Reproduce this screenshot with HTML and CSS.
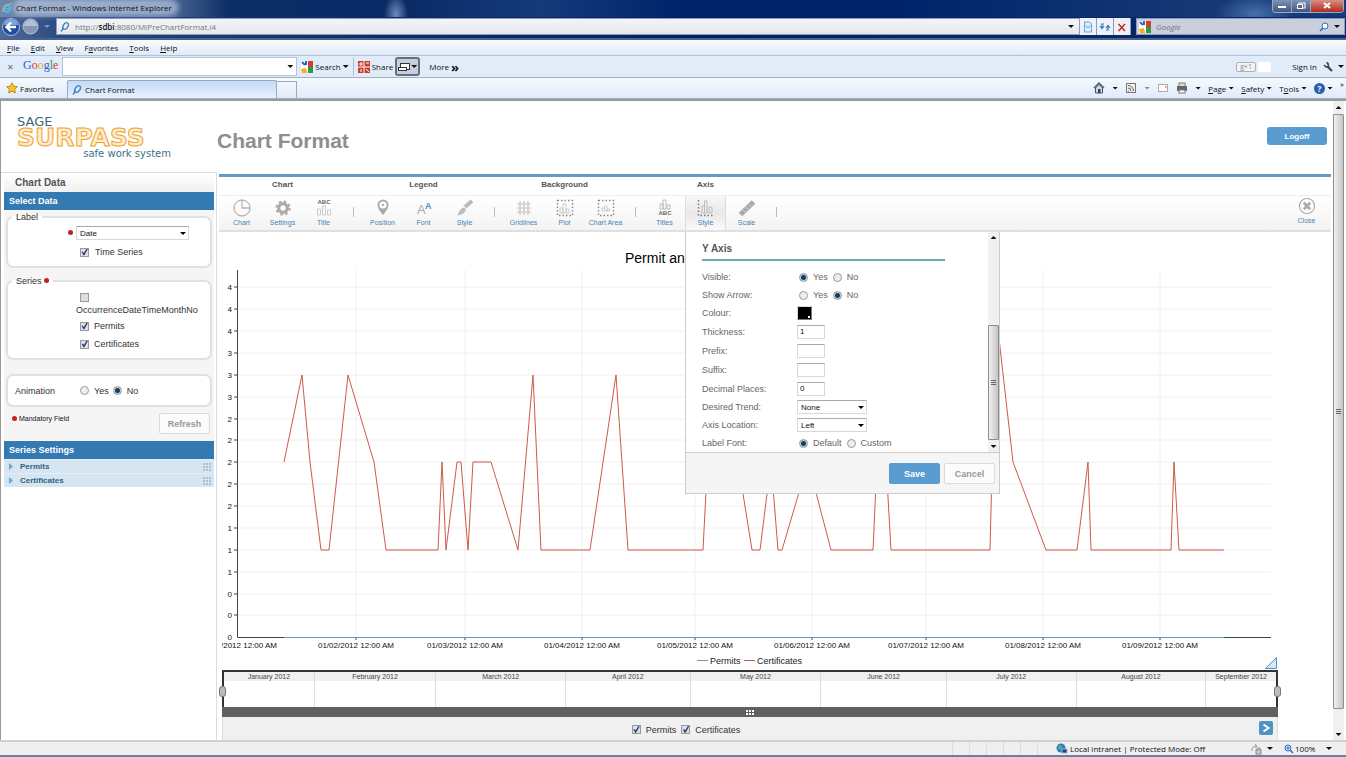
FILE: index.html
```html
<!DOCTYPE html>
<html lang="en">
<head>
    <meta charset="UTF-8">
    <meta name="viewport" content="width=device-width, initial-scale=1.0">
    <title>Chart Format</title>
    <link rel="stylesheet" href="styles.css">
</head>
<body>
    <!-- Browser window -->
    <div class="browser">
        <div class="title-bar">
            <svg class="icon-10" viewBox="0 0 10 10"><circle cx="5" cy="5.500" r="3.200" fill="none" stroke="#4db8f0" stroke-width="2"/><path d="M2.500 5.500h5" stroke="#4db8f0" stroke-width="1.400"/><path d="M1 9C0 6 5 0 9.500 1" fill="none" stroke="#f0c040" stroke-width="1"/></svg>
            <span class="window-title">Chart Format - Windows Internet Explorer</span>
            <div class="window-buttons">
                <button class="win-btn" aria-label="Minimize"><svg viewBox="0 0 18 12"><rect x="5" y="6" width="8" height="2" fill="#fff"/></svg></button>
                <button class="win-btn" aria-label="Restore"><svg viewBox="0 0 18 12"><rect x="7" y="3" width="6" height="5" fill="none" stroke="#fff"/><rect x="5.500" y="4.500" width="5" height="4" fill="#54688f" stroke="#fff"/></svg></button>
                <button class="win-btn win-close" aria-label="Close window"><svg viewBox="0 0 32 12"><path d="M13 3l6 5M19 3l-6 5" stroke="#fff" stroke-width="2"/></svg></button>
            </div>
        </div>

        <div class="nav-bar">
            <button class="plain" aria-label="Back"><svg width="20" height="20" viewBox="0 0 20 20"><circle cx="10" cy="10" r="8.500" fill="#1f4f9c" stroke="#a9bcdc"/><path d="M3 8a7 6 0 0 1 14 0z" fill="#7fa4dc"/><path d="M15 10H6M10 5.500L5.500 10l4.500 4.500" fill="none" stroke="#fff" stroke-width="2.400"/></svg></button>
            <button class="plain" aria-label="Forward"><svg width="17" height="17" viewBox="0 0 17 17"><circle cx="8.500" cy="8.500" r="7.500" fill="#8595b4" stroke="#bcc7dc"/><path d="M2 8a6.500 6 0 0 1 13 0z" fill="#b4c0d6"/></svg></button>
            <span class="caret blue-caret"></span>
            <div class="address">
                <svg class="icon-10" viewBox="0 0 10 10"><ellipse cx="5.600" cy="4" rx="2.300" ry="3.600" transform="rotate(35 5.600 4)" fill="none" stroke="#3c86c0" stroke-width="1.400"/><path d="M3.500 6L1 9.500" stroke="#3c86c0" stroke-width="1.400"/></svg>
                <span>http://<b>sdbi</b>:8080/MIPreChartFormat.i4</span>
                <span class="caret push"></span>
            </div>
            <button class="nav-btn" aria-label="Compatibility view"><svg viewBox="0 0 16 16"><path d="M4.500 3h5l2 2v8h-7z" fill="#dceefa" stroke="#6aa8d8"/><path d="M4 8l2-1 2 2 2-2 2 1" fill="none" stroke="#6aa8d8"/></svg></button>
            <button class="nav-btn" aria-label="Refresh page"><svg viewBox="0 0 16 16"><path d="M7 5H5v4M3 7l2 2.500L7 7M9 11h2V7M9 9l2-2.500L13 9" fill="none" stroke="#2a76c4" stroke-width="1.200"/></svg></button>
            <button class="nav-btn" aria-label="Stop"><svg viewBox="0 0 16 16"><path d="M4.500 5l6.500 7M11 5l-6.500 7" stroke="#cc2222" stroke-width="1.500"/></svg></button>
            <div class="search-box">
                <svg class="icon-12" viewBox="0 0 12 12"><rect width="12" height="12" fill="#fff"/><rect x="7" width="5" height="6" fill="#d93a2b"/><rect x="7" y="6" width="5" height="6" fill="#2c9a46"/><path d="M0 8l5-1 1 5H1z" fill="#f0b020"/><path d="M1 1l3 3M5 0v4" stroke="#2a62c8" stroke-width="2"/></svg>
                <input type="text" placeholder="Google" aria-label="Search Google">
                <svg class="icon-10" viewBox="0 0 10 10"><circle cx="6" cy="4" r="3" fill="#fff" stroke="#2c6cc0"/><path d="M4 6L1 9" stroke="#2c6cc0" stroke-width="1.600"/></svg>
                <span class="caret"></span>
            </div>
        </div>

        <div class="menu-bar">
            <a href="#"><u>F</u>ile</a>
            <a href="#"><u>E</u>dit</a>
            <a href="#"><u>V</u>iew</a>
            <a href="#">F<u>a</u>vorites</a>
            <a href="#"><u>T</u>ools</a>
            <a href="#"><u>H</u>elp</a>
        </div>

        <div class="google-bar">
            <button class="plain close-x" aria-label="Close toolbar">✕</button>
            <span class="google"><i class="b">G</i><i class="r">o</i><i class="y">o</i><i class="b">g</i><i class="g">l</i><i class="r">e</i></span>
            <div class="google-input">
                <input type="text" aria-label="Google toolbar search">
                <span class="caret"></span>
            </div>
            <svg class="icon-12" viewBox="0 0 12 12"><rect width="12" height="12" fill="#fff"/><rect x="7" width="5" height="6" fill="#d93a2b"/><rect x="7" y="6" width="5" height="6" fill="#2c9a46"/><path d="M0 8l5-1 1 5H1z" fill="#f0b020"/><path d="M1 1l3 3M5 0v4" stroke="#2a62c8" stroke-width="2"/></svg>
            <button class="plain">Search</button>
            <span class="caret"></span>
            <span class="bar-sep"></span>
            <svg class="icon-12" viewBox="0 0 12 12"><rect width="12" height="12" fill="#c8402c"/><path d="M6 0v12M0 6h12" stroke="#fff"/><path d="M3 1v4M1 3h4M8 2h3M8 8l3 3M3 8v3" stroke="#fff"/></svg>
            <button class="plain">Share</button>
            <button class="share-btn" aria-label="Sidebar"><svg width="12" height="12" viewBox="0 0 12 12"><rect x="2.500" y="2.500" width="9" height="6" fill="#fff" stroke="#333"/><rect x=".5" y="6.500" width="8" height="3" fill="#fff" stroke="#333"/></svg><span class="caret"></span></button>
            <button class="plain more">More <b>»</b></button>
            <span class="plus-one push">g+1</span>
            <span class="blank-chip"></span>
            <button class="plain sign-in">Sign In</button>
            <svg class="icon-10" viewBox="0 0 10 10"><path d="M4.500 4.500L9 9" stroke="#444" stroke-width="2.200"/><path d="M1 3l2 2 2.500-.5L5 1.500 3.500.5" fill="none" stroke="#444" stroke-width="1.600"/></svg>
            <span class="caret"></span>
        </div>

        <div class="tab-bar">
            <button class="plain favorites"><svg width="12" height="12" viewBox="0 0 12 12"><path d="M6 .8l1.600 3.400 3.700.5-2.700 2.600.7 3.700L6 9.200 2.700 11l.7-3.700L.7 4.700l3.700-.5z" fill="#f6c22e" stroke="#c88a10"/></svg>Favorites</button>
            <div class="tab">
                <svg class="icon-10" viewBox="0 0 10 10"><ellipse cx="5.600" cy="4" rx="2.300" ry="3.600" transform="rotate(35 5.600 4)" fill="none" stroke="#3c86c0" stroke-width="1.400"/><path d="M3.500 6L1 9.500" stroke="#3c86c0" stroke-width="1.400"/></svg>
                Chart Format
            </div>
            <div class="new-tab"></div>
            <div class="commands">
                <svg class="icon-12" viewBox="0 0 12 12"><path d="M1 6l5-5 5 5" fill="none" stroke="#456" stroke-width="1.300"/><path d="M2.500 6v5h7V6L6 2.500z" fill="#cfdced" stroke="#456"/><rect x="5" y="7" width="2.500" height="4" fill="#345"/></svg>
                <span class="caret"></span>
                <svg class="icon-12 gap" viewBox="0 0 12 12"><rect x="1.500" y="1.500" width="9" height="9" fill="#eee" stroke="#777"/><path d="M3 9h1M3 6a3 3 0 0 1 3 3M3 3.500A5.500 5.500 0 0 1 8.500 9" fill="none" stroke="#666"/></svg>
                <span class="caret dim"></span>
                <svg class="icon-12" viewBox="0 0 12 12"><rect x="1.500" y="2.500" width="9" height="7" fill="#fff" stroke="#aaa"/><rect x="8" y="4" width="1.500" height="2" fill="#d99"/></svg>
                <svg class="icon-12 gap" viewBox="0 0 12 12"><rect x="3" y="1" width="6" height="4" fill="#ddd" stroke="#777"/><rect x="1" y="4" width="10" height="5" fill="#666"/><rect x="3" y="8" width="6" height="3" fill="#fff" stroke="#777"/></svg>
                <span class="caret"></span>
                <a href="#"><span><u>P</u>age</span><span class="caret"></span></a>
                <a href="#"><span><u>S</u>afety</span><span class="caret"></span></a>
                <a href="#"><span>T<u>o</u>ols</span><span class="caret"></span></a>
                <span class="help">?</span>
                <span class="caret"></span>
                <span class="chev">»</span>
            </div>
        </div>
    </div>

    <!-- Page -->
    <div class="page">
        <div class="content">
            <header class="header">
                <svg class="logo" width="166" height="46" viewBox="0 0 166 46" role="img" aria-label="Sage Surpass">
                    <text x="0" y="11" class="logo-sage">SAGE</text>
                    <text x="0" y="31" class="logo-surpass">SURPASS</text>
                    <text x="154" y="42" class="logo-tag">safe work system</text>
                </svg>
                <h1>Chart Format</h1>
                <button class="logoff">Logoff</button>
            </header>

            <div class="columns">
                <aside class="sidebar">
                    <h2 class="chart-data">Chart Data</h2>
                    <h3 class="bar">Select Data</h3>
                    <form class="select-data">
                        <fieldset class="box label-box">
                            <legend>Label</legend>
                            <div class="date-row">
                                <span class="dot"></span>
                                <span class="select wide"><select aria-label="Label field"><option>Date</option></select></span>
                            </div>
                            <label class="check time-series"><input type="checkbox" checked>Time Series</label>
                        </fieldset>
                        <fieldset class="box series-box">
                            <legend>Series <span class="dot"></span></legend>
                            <label class="check stacked"><input type="checkbox"><span>OccurrenceDateTimeMonthNo</span></label>
                            <label class="check"><input type="checkbox" checked>Permits</label>
                            <label class="check"><input type="checkbox" checked>Certificates</label>
                        </fieldset>
                        <div class="box animation">
                            <span class="animation-label">Animation</span>
                            <label class="check"><input type="radio" name="animation">Yes</label>
                            <label class="check"><input type="radio" name="animation" checked>No</label>
                        </div>
                        <div class="form-foot">
                            <span class="mandatory"><span class="dot"></span>Mandatory Field</span>
                            <button type="button" class="btn">Refresh</button>
                        </div>
                    </form>
                    <h3 class="bar">Series Settings</h3>
                    <div class="series-row"><span class="arrow"></span>Permits<span class="grip"></span></div>
                    <div class="series-row"><span class="arrow"></span>Certificates<span class="grip"></span></div>
                </aside>

                <main class="main">
                    <div class="group-titles">
                        <span>Chart</span>
                        <span>Legend</span>
                        <span>Background</span>
                        <span>Axis</span>
                    </div>
                    <div class="tools">
                        <button class="tool"><svg viewBox="0 0 20 20"><circle cx="10" cy="10" r="8" fill="none" stroke="#b8b8b8" stroke-width="1.300"/><path d="M10 2v8h8" fill="none" stroke="#b8b8b8" stroke-width="1.300"/></svg>Chart</button>
                        <button class="tool"><svg viewBox="0 0 20 20"><circle cx="10" cy="10" r="4.300" fill="none" stroke="#aaa" stroke-width="3.200"/><circle cx="10" cy="10" r="6.500" fill="none" stroke="#aaa" stroke-width="2.200" stroke-dasharray="2.600 2.500"/></svg>Settings</button>
                        <button class="tool"><svg viewBox="0 0 20 20"><text x="10" y="6" class="abc">ABC</text><path d="M3.500 11h3v6h-3zM8.500 8h3v9h-3zM13.500 12h3v5h-3z" fill="none" stroke="#ccc"/></svg>Title</button>
                        <span class="tool-sep"></span>
                        <button class="tool"><svg viewBox="0 0 20 20"><path d="M10 1.500a5.500 5.500 0 0 0-5.500 5.500c0 4 5.500 10 5.500 10s5.500-6 5.500-10A5.500 5.500 0 0 0 10 1.500z" fill="#aaa"/><circle cx="10" cy="7" r="3.600" fill="#fff"/><circle cx="10" cy="7" r="1.200" fill="#aaa"/></svg>Position</button>
                        <button class="tool"><svg viewBox="0 0 20 20"><text x="3" y="16" font-size="13" fill="#aaa">A</text><text x="11" y="11" font-size="9" font-weight="bold" fill="#4d8fc0">A</text></svg>Font</button>
                        <button class="tool"><svg viewBox="0 0 20 20"><path d="M17 3l-7 6" stroke="#bbb" stroke-width="4"/><path d="M9 9.500l2 2c-1 4-5 5.500-9 6 2-2 2-7 7-8z" fill="#bbb"/></svg>Style</button>
                        <span class="tool-sep"></span>
                        <button class="tool"><svg viewBox="0 0 20 20"><path d="M6 3v14M10 3v14M14 3v14M3 6h14M3 10h14M3 14h14" stroke="#c4c4c4" stroke-width="1.200"/></svg>Gridlines</button>
                        <button class="tool"><svg viewBox="0 0 20 20"><rect x="2.500" y="2.500" width="15" height="15" fill="none" stroke="#888" stroke-width="1.400" stroke-dasharray="1.500 2"/><path d="M5 10h3v5H5zM8 6h3v9H8zM11 11h3v4h-3z" fill="none" stroke="#ccc"/></svg>Plot</button>
                        <button class="tool"><svg viewBox="0 0 20 20"><rect x="2.500" y="2.500" width="15" height="15" fill="none" stroke="#888" stroke-width="1.400" stroke-dasharray="1.500 2"/><path d="M6 10h2.500v3H6zM8.500 8H11v5H8.500zM11 11h2.500v2H11z" fill="none" stroke="#ccc"/></svg>Chart Area</button>
                        <span class="tool-sep"></span>
                        <button class="tool"><svg viewBox="0 0 20 20"><path d="M5 6h3v5H5zM8 2h3v9H8zM12 7h3v4h-3z" fill="none" stroke="#bbb"/><text x="10" y="17" class="abc">ABC</text></svg>Titles</button>
                        <div class="tool-wrap">
                            <button class="tool active"><svg viewBox="0 0 20 20"><path d="M2.500 2v15.500H18" fill="none" stroke="#777" stroke-width="1.500" stroke-dasharray="1.500 2"/><path d="M6 8h2.500v7H6zM8.500 3H11v12H8.500zM13 9h3v6h-3z" fill="none" stroke="#bbb"/></svg>Style</button>

                            <!-- Axis style panel -->
                            <form class="panel">
                                <div class="panel-scroll">
                                    <div class="panel-body">
                                        <h4>Y Axis</h4>
                                        <div class="field"><span>Visible:</span><label class="check"><input type="radio" name="visible" checked>Yes</label><label class="check"><input type="radio" name="visible">No</label></div>
                                        <div class="field"><span>Show Arrow:</span><label class="check"><input type="radio" name="arrow">Yes</label><label class="check"><input type="radio" name="arrow" checked>No</label></div>
                                        <div class="field"><span>Colour:</span><button type="button" class="swatch" aria-label="Colour"></button></div>
                                        <div class="field tall"><label for="thickness">Thickness:</label><input type="text" id="thickness" value="1"></div>
                                        <div class="field tall"><label for="prefix">Prefix:</label><input type="text" id="prefix"></div>
                                        <div class="field tall"><label for="suffix">Suffix:</label><input type="text" id="suffix"></div>
                                        <div class="field tall"><label for="decimals">Decimal Places:</label><input type="text" id="decimals" value="0"></div>
                                        <div class="field"><label for="trend">Desired Trend:</label><span class="select"><select id="trend"><option>None</option></select></span></div>
                                        <div class="field"><label for="location">Axis Location:</label><span class="select"><select id="location"><option>Left</option></select></span></div>
                                        <div class="field"><span>Label Font:</span><label class="check"><input type="radio" name="font" checked>Default</label><label class="check"><input type="radio" name="font">Custom</label></div>
                                    </div>
                                    <div class="scrollbar panel-bar">
                                        <span class="caret up"></span>
                                        <div class="thumb"><i></i></div>
                                        <span class="caret"></span>
                                    </div>
                                </div>
                                <div class="panel-foot">
                                    <button type="button" class="btn save">Save</button>
                                    <button type="button" class="btn">Cancel</button>
                                </div>
                            </form>
                        </div>
                        <button class="tool"><svg viewBox="0 0 20 20"><path d="M3.500 16.500L16.500 4" stroke="#aaa" stroke-width="5"/><path d="M6 12l2 2M9 9l2 2M12 6.500l2 2" stroke="#ddd"/></svg>Scale</button>
                        <span class="tool-sep"></span>
                        <button class="tool close"><svg viewBox="0 0 20 20"><circle cx="10" cy="10" r="7.500" fill="#fff" stroke="#aaa" stroke-width="1.200"/><path d="M6.800 6.800l6.400 6.400M13.200 6.800l-6.400 6.400" stroke="#aaa" stroke-width="2.800"/></svg>Close</button>
                    </div>

                    <div class="chart">
                        <svg class="plot" viewBox="0 0 1056 438">
                            <text x="403" y="31" class="chart-title">Permit and</text>
                            <path class="grid" d="M16 55H1049M16 77H1049M16 99H1049M16 121H1049M16 143H1049M16 165H1049M16 187H1049M16 208H1049M16 230H1049M16 252H1049M16 274H1049M16 296H1049M16 318H1049M16 340H1049M16 362H1049M16 383H1049M134 38V405M243 38V405M360 38V405M473 38V405M590 38V405M704 38V405M821 38V405M938 38V405"/>
                            <path class="axis" d="M15.500 38V405.500H1049M12 55H16M12 77H16M12 99H16M12 121H16M12 143H16M12 165H16M12 187H16M12 208H16M12 230H16M12 252H16M12 274H16M12 296H16M12 318H16M12 340H16M12 362H16M12 383H16M134 405v3M243 405v3M360 405v3M473 405v3M590 405v3M704 405v3M821 405v3M938 405v3"/>
                            <path class="permits" d="M62 405.500H1002"/>
                            <polyline class="certificates" points="62,230 80,143 88,230 99,318 107,318 126,143 152,230 164,318 216,318 220,230 224,318 235,230 239,230 246,318 251,230 269,230 296,318 311,143 319,318 368,318 394,143 406,318 481,318 490,143 502,143 530,318 538,318 549,230 556,318 560,318 586,230 609,318 651,318 655,230 664,230 669,318 768,318 774,80 791,230 824,318 855,318 866,230 869,318 949,318 952,230 957,318 1002,318"/>
                            <g class="y-labels">
                                <text x="10" y="58">4</text>
                                <text x="10" y="80">4</text>
                                <text x="10" y="102">4</text>
                                <text x="10" y="124">3</text>
                                <text x="10" y="146">3</text>
                                <text x="10" y="168">3</text>
                                <text x="10" y="190">2</text>
                                <text x="10" y="211">2</text>
                                <text x="10" y="233">2</text>
                                <text x="10" y="255">2</text>
                                <text x="10" y="277">2</text>
                                <text x="10" y="299">1</text>
                                <text x="10" y="321">1</text>
                                <text x="10" y="343">1</text>
                                <text x="10" y="365">0</text>
                                <text x="10" y="386">0</text>
                                <text x="10" y="408">0</text>
                            </g>
                            <g class="x-labels">
                                <text x="27" y="416">/2012 12:00 AM</text>
                                <text x="134" y="416">01/02/2012 12:00 AM</text>
                                <text x="243" y="416">01/03/2012 12:00 AM</text>
                                <text x="360" y="416">01/04/2012 12:00 AM</text>
                                <text x="473" y="416">01/05/2012 12:00 AM</text>
                                <text x="590" y="416">01/06/2012 12:00 AM</text>
                                <text x="704" y="416">01/07/2012 12:00 AM</text>
                                <text x="821" y="416">01/08/2012 12:00 AM</text>
                                <text x="938" y="416">01/09/2012 12:00 AM</text>
                            </g>
                            <path class="permits" d="M475 428.500h11"/>
                            <text x="488" y="432" class="legend">Permits</text>
                            <path class="certificates" d="M522 428.500h11"/>
                            <text x="535" y="432" class="legend">Certificates</text>
                            <path d="M1043.500 436.500h11v-11z" fill="#d5e8f5" stroke="#4d8fc0"/>
                        </svg>

                        <div class="range">
                            <span>January 2012</span>
                            <span>February 2012</span>
                            <span>March 2012</span>
                            <span>April 2012</span>
                            <span>May 2012</span>
                            <span>June 2012</span>
                            <span>July 2012</span>
                            <span>August 2012</span>
                            <span>September 2012</span>
                            <i class="handle left"></i>
                            <i class="handle right"></i>
                        </div>
                        <div class="range-bar"><span class="grip"></span></div>
                        <div class="chart-foot">
                            <label class="check"><input type="checkbox" checked>Permits</label>
                            <label class="check"><input type="checkbox" checked>Certificates</label>
                            <button class="next" aria-label="Next"><svg width="14" height="14" viewBox="0 0 14 14"><path d="M4.500 3.500l5 3.500-5 3.500" fill="none" stroke="#fff" stroke-width="2"/></svg></button>
                        </div>
                    </div>
                </main>
            </div>
        </div>
        <div class="scrollbar page-bar">
            <span class="caret up"></span>
            <div class="thumb"><i></i></div>
            <span class="caret"></span>
        </div>
    </div>

    <!-- Status bar -->
    <div class="status-bar">
        <div class="cells"><i></i><i></i><i></i><i></i><i></i><i></i></div>
        <div class="zone">
            <svg class="icon-12" viewBox="0 0 12 12"><circle cx="5" cy="5" r="4.500" fill="#2a7fc8"/><path d="M2 3l3-1 1 3-3 2z" fill="#5cb85c"/><rect x="6" y="6" width="5" height="4" fill="#1c3f8c" stroke="#9bc"/></svg>
            Local intranet | Protected Mode: Off
        </div>
        <div class="privacy">
            <svg class="icon-12" viewBox="0 0 12 12"><path d="M2 8a4 4 0 0 1 4-5M5 1l2 2-2 2" fill="none" stroke="#999"/><rect x="6" y="7" width="5" height="4" fill="#ccc" stroke="#888"/><path d="M7 7V5h3v2" fill="none" stroke="#888"/></svg>
            <span class="caret"></span>
        </div>
        <div class="zoom">
            <svg class="icon-10" viewBox="0 0 10 10"><circle cx="4" cy="4" r="3" fill="#cfe3f7" stroke="#2c6cc0"/><path d="M6 6l3 3" stroke="#2c6cc0" stroke-width="1.600"/><path d="M2.500 4h3M4 2.500v3" stroke="#2c6cc0"/></svg>
            100%
            <span class="caret push"></span>
        </div>
    </div>
</body>
</html>
```

FILE: styles.css
```css
* {
    margin: 0;
    padding: 0;
    box-sizing: border-box;
}

body {
    display: flex;
    flex-direction: column;
    height: 100vh;
    overflow: hidden;
    background: #fff;
    font-family: "Liberation Sans", Arial, sans-serif;
    font-size: 9px;
    color: #333;
}

button,
input,
select {
    font: inherit;
    color: inherit;
    border: none;
    background: none;
}

a {
    color: inherit;
    text-decoration: none;
}

svg {
    display: block;
    flex: none;
}

.icon-10 {
    width: 10px;
    height: 10px;
}

.icon-12 {
    width: 12px;
    height: 12px;
}

.push {
    margin-left: auto;
}

.caret {
    display: inline-block;
    flex: none;
    width: 6px;
    height: 3px;
    background: #111;
    clip-path: polygon(0 0, 100% 0, 50% 100%);
}

.caret.up {
    clip-path: polygon(50% 0, 100% 100%, 0 100%);
}

.caret.dim {
    background: #888;
}

/* Browser window */
.browser,
.status-bar {
    font-family: "Open Sans", "Segoe UI", sans-serif;
    font-size: 8px;
    color: #111;
}

.title-bar {
    display: flex;
    align-items: center;
    gap: 4px;
    height: 17px;
    padding: 0 0 2px 2px;
    background:
        radial-gradient(ellipse 12px 20px at 396px 14px, rgba(150, 180, 225, 0.7), transparent),
        radial-gradient(ellipse 40px 20px at 1255px 14px, rgba(120, 165, 220, 0.5), transparent),
        linear-gradient(90deg, #6f86ac 0, #56719d 160px, #0c2d66 230px, #0a2a66 400px, #163a7a 540px, #00246a 680px, #00246a 900px, #163875 1200px, #123a7c);
}

.window-title {
    padding: 0 4px 0 0;
    border-radius: 6px;
    background: rgba(190, 205, 228, 0.6);
    box-shadow: 0 0 5px 3px rgba(190, 205, 228, 0.6);
}

.window-buttons {
    display: flex;
    align-self: flex-start;
    margin-left: auto;
    margin-right: 2px;
    border: 1px solid #9aabc8;
    border-top: none;
    border-radius: 0 0 4px 4px;
    overflow: hidden;
}

.win-btn {
    height: 12px;
    background: linear-gradient(#7f93b8, #42567f);
    border-right: 1px solid #9aabc8;
}

.win-btn svg {
    height: 12px;
}

.win-close {
    border-right: none;
    background: linear-gradient(#d99084, #b02a18);
}

.nav-bar {
    display: flex;
    align-items: center;
    height: 23px;
    padding: 0 1px 2px;
    background: linear-gradient(90deg, #51699a 0, #2c4a80 60px, #12306a 300px, #04205f 700px, #0a2a68);
    border-bottom: 2px solid #4a628f;
}

.plain {
    display: flex;
    align-items: center;
}

.nav-bar .plain + .plain {
    margin-left: 1px;
}

.blue-caret {
    margin: 0 6px 0 5px;
    background: #6f9bdc;
}

.address {
    display: flex;
    flex: 1;
    align-items: center;
    gap: 5px;
    height: 17px;
    padding: 0 5px 0 3px;
    border: 1px solid #8c9cba;
    background: linear-gradient(#f4f4fa, #e3e9ea);
    color: #777;
}

.address b {
    color: #111;
    font-weight: 600;
}

.nav-btn {
    height: 17px;
    width: 17px;
    border-right: 1px solid #8c9cba;
    background: #eef1f8;
}

.nav-btn svg {
    width: 16px;
    height: 16px;
}

.search-box {
    display: flex;
    align-items: center;
    gap: 5px;
    width: 209px;
    height: 17px;
    margin-left: 5px;
    padding: 0 4px 0 2px;
    border: 1px solid #8c9cba;
    background: #c9cfdd;
}

.search-box input {
    flex: 1;
    min-width: 0;
}

.search-box input::placeholder {
    color: #777;
    font-style: italic;
}

.menu-bar {
    display: flex;
    align-items: center;
    gap: 11px;
    height: 16px;
    padding: 0 7px;
    background: linear-gradient(#fafcff, #dfeaf7);
    border-bottom: 1px solid #b4c0d2;
}

.google-bar {
    display: flex;
    align-items: center;
    gap: 2px;
    height: 22px;
    padding: 0 2px 0 7px;
    background: #e0ecf9;
    border-bottom: 1px solid #a4b0c2;
}

.close-x {
    color: #667;
    font-size: 8px;
}

.google {
    margin: 0 2px 2px 7px;
    font-family: "Liberation Serif", serif;
    font-size: 12px;
}

.google i {
    font-style: normal;
}

.google .b {
    color: #2f5fd0;
}

.google .r {
    color: #d8402c;
}

.google .y {
    color: #e8a818;
}

.google .g {
    color: #2c9a46;
}

.google-input {
    display: flex;
    align-items: center;
    width: 235px;
    height: 19px;
    margin-right: 2px;
    padding-right: 3px;
    background: #fff;
    border: 1px solid #b8c4d4;
}

.google-input input {
    flex: 1;
    min-width: 0;
}

.bar-sep {
    width: 1px;
    height: 18px;
    margin: 0 2px;
    background: #b4c0d2;
}

.share-btn {
    display: flex;
    align-items: center;
    gap: 1px;
    height: 19px;
    padding: 0 1px 0 1px;
    border: 2px solid #68707e;
    border-radius: 3px;
    background: #c5d0de;
}

.more {
    gap: 2px;
    margin-left: 7px;
}

.more b {
    font-size: 13px;
    line-height: 12px;
}

.plus-one {
    padding: 0 3px;
    border: 1px solid #b0b0b0;
    border-radius: 2px;
    background: #f4f4f4;
    color: #888;
    font-size: 7px;
    line-height: 8px;
}

.blank-chip {
    width: 13px;
    height: 10px;
    margin-right: 19px;
    background: #fff;
}

.sign-in {
    margin-right: 4px;
}

.google-bar > .caret:last-child {
    margin-left: 3px;
}

.tab-bar {
    display: flex;
    align-items: flex-end;
    height: 21px;
    padding-left: 6px;
    background: linear-gradient(#f6faff, #e0eaf8);
    border-bottom: 1px solid #a4b0c2;
}

.favorites {
    gap: 2px;
    width: 61px;
    height: 20px;
}

.tab {
    display: flex;
    align-items: center;
    gap: 3px;
    width: 210px;
    height: 18px;
    padding-left: 4px;
    background: linear-gradient(#c3d9f5, #e8f2fe);
    border: 1px solid #98a8c0;
    border-bottom: none;
    border-radius: 2px 2px 0 0;
}

.new-tab {
    width: 20px;
    height: 17px;
    border: 1px solid #98a8c0;
    border-left: none;
    border-bottom: none;
}

.commands {
    display: flex;
    align-items: center;
    gap: 7px;
    height: 20px;
    margin-left: auto;
    padding-right: 2px;
}

.commands a {
    display: flex;
    align-items: center;
    gap: 2px;
}

.help {
    width: 11px;
    height: 11px;
    border-radius: 50%;
    background: #2c5fae;
    color: #fff;
    font-size: 8px;
    font-weight: bold;
    line-height: 11px;
    text-align: center;
}

.help + .caret {
    margin-left: -5px;
}

.chev {
    align-self: flex-start;
}

/* Page frame */
.page {
    display: flex;
    flex: 1;
    min-height: 0;
    border-top: 2px solid #999;
    border-left: 1px solid #999;
}

.content {
    display: flex;
    flex: 1;
    flex-direction: column;
    min-width: 0;
}

.scrollbar {
    display: flex;
    flex-direction: column;
    align-items: center;
    flex: none;
    width: 11px;
    padding: 4px 0;
    background: #f0f0f0;
}

.thumb {
    display: flex;
    align-items: center;
    justify-content: center;
    width: 11px;
    background: linear-gradient(90deg, #f0f0f0, #c4c4c4);
    border: 1px solid #8e8e8e;
    border-radius: 1px;
}

.thumb i {
    width: 5px;
    height: 5px;
    background: repeating-linear-gradient(#666 0 1px, transparent 1px 2px);
}

.page-bar {
    margin: 0 2px;
    padding-top: 5px;
}

.page-bar .thumb {
    flex: 1;
    margin: 5px 0 24px;
}

/* Header */
.header {
    display: flex;
    flex: none;
    height: 71px;
    padding-left: 16px;
}

.logo {
    margin-top: 14px;
    font-family: "DejaVu Sans", sans-serif;
}

.logo-sage {
    font-size: 13px;
    fill: #3c6a78;
}

.logo-surpass {
    font-size: 25px;
    font-weight: bold;
    fill: #fdeccd;
    stroke: #f0a22c;
}

.logo-tag {
    font-size: 10px;
    fill: #3f7088;
    text-anchor: end;
}

h1 {
    margin: 28px 0 0 34px;
    font-size: 21px;
    line-height: 24px;
    color: #8e8e8e;
}

.logoff {
    width: 60px;
    height: 18px;
    margin: 26px 4px 0 auto;
    border-radius: 3px;
    background: #5a9bd0;
    color: #fff;
    font-weight: bold;
    font-size: 8px;
}

.columns {
    display: flex;
    flex: 1;
    min-height: 0;
}

/* Sidebar */
.sidebar {
    width: 216px;
    flex: none;
    padding: 0 2px 0 3px;
    border-top: 1px solid #ddd;
    border-right: 1px solid #ddd;
}

.chart-data {
    padding-left: 11px;
    font-size: 10px;
    line-height: 19px;
    color: #555;
    background: linear-gradient(#fff, #f0f0f0);
}

.bar {
    padding-left: 5px;
    background: #337ab3;
    color: #fff;
    font-size: 9px;
    line-height: 18px;
}

.select-data {
    padding: 2px 2px 7px;
    background: #f5f5f5;
}

.box {
    border: 2px solid #e0e0e0;
    border-radius: 7px;
    background: #fff;
}

.box legend {
    margin-left: 4px;
    padding: 0 4px;
    line-height: 10px;
}

.label-box {
    height: 56px;
    margin-bottom: 8px;
}

.series-box {
    height: 84px;
    margin-bottom: 14px;
}

.dot {
    display: inline-block;
    width: 5px;
    height: 5px;
    margin-bottom: 1px;
    border-radius: 50%;
    background: #c82020;
}

.date-row {
    display: flex;
    align-items: center;
    gap: 3px;
    padding: 4px 0 0 60px;
}

.select {
    position: relative;
    width: 70px;
}

.select.wide {
    width: 113px;
}

.select select {
    display: block;
    width: 100%;
    height: 14px;
    padding-left: 3px;
    appearance: none;
    background: #fff;
    border: 1px solid #d8d8d8;
    border-top-color: #aaa;
    font-size: 8px;
    color: #111;
}

.select::after {
    content: "";
    position: absolute;
    top: 6px;
    right: 3px;
    width: 6px;
    height: 3px;
    background: #000;
    clip-path: polygon(0 0, 100% 0, 50% 100%);
}

.check {
    display: flex;
    align-items: center;
    gap: 5px;
}

.time-series {
    gap: 6px;
    margin-top: 7px;
    padding-left: 72px;
}

.series-box .check {
    height: 18px;
    padding-left: 72px;
}

.series-box .stacked {
    flex-direction: column;
    align-items: flex-start;
    gap: 3px;
    height: 24px;
    margin-top: 7px;
    padding-left: 68px;
}

.stacked input {
    margin-left: 4px;
}

input[type="checkbox"] {
    flex: none;
    width: 9px;
    height: 9px;
    appearance: none;
    border: 1px solid #999;
    background: #dcdfe6;
}

input[type="checkbox"]:checked::before {
    content: "";
    display: block;
    width: 7px;
    height: 7px;
    background: #2c3f78;
    clip-path: polygon(8% 45%, 28% 45%, 42% 65%, 78% 5%, 100% 5%, 48% 98%, 34% 98%);
}

input[type="radio"] {
    flex: none;
    width: 9px;
    height: 9px;
    appearance: none;
    border: 1px solid #999;
    border-radius: 50%;
    background: #eee;
}

input[type="radio"]:checked {
    background: radial-gradient(circle, #143f5c 0 2px, #b5d6e8 3px);
}

.animation {
    display: flex;
    align-items: center;
    height: 33px;
    gap: 4px;
    padding-left: 7px;
}

.animation-label {
    width: 61px;
}

.form-foot {
    display: flex;
    justify-content: space-between;
    padding: 6px 2px 0 6px;
}

.mandatory {
    display: flex;
    align-items: center;
    gap: 2px;
    height: 10px;
    font-size: 7px;
    color: #111;
}

.mandatory .dot {
    margin: 0;
}

.btn {
    width: 51px;
    height: 21px;
    border: 1px solid #dadada;
    border-radius: 2px;
    background: #fcfcfc;
    color: #999;
    font-weight: bold;
}

.series-row {
    display: flex;
    align-items: center;
    gap: 7px;
    height: 14px;
    padding: 0 3px 0 5px;
    background: #d5e5f2;
    border-top: 1px solid #e4eef8;
    color: #33607f;
    font-size: 8px;
    font-weight: bold;
}

.arrow {
    width: 4px;
    height: 7px;
    background: #6fa5cc;
    clip-path: polygon(0 0, 100% 50%, 0 100%);
}

.grip {
    width: 8px;
    height: 8px;
    background: repeating-linear-gradient(90deg, transparent 0 2px, #d5e5f2 2px 3px), repeating-linear-gradient(#b2bec8 0 2px, transparent 2px 3px);
}

.series-row .grip {
    margin-left: auto;
}

/* Main area */
.main {
    display: flex;
    flex: 1;
    flex-direction: column;
    min-width: 0;
    margin: 2px 0 0 2px;
}

.group-titles {
    display: flex;
    height: 21px;
    padding-left: 2px;
    border-top: 3px solid #659bc4;
}

.group-titles span {
    width: 141px;
    padding: 2px 18px 0 0;
    font-size: 8px;
    font-weight: bold;
    line-height: 11px;
    color: #555;
    text-align: center;
}

.tools {
    display: flex;
    align-items: stretch;
    flex: none;
    height: 37px;
    padding: 0 4px 0 2px;
    background: linear-gradient(#fff, #f3f3f3);
    border-top: 1px solid #eee;
    border-bottom: 2px solid #e0e0e0;
}

.tool {
    display: flex;
    flex-direction: column;
    align-items: center;
    width: 41px;
    height: 34px;
    padding-top: 2px;
    font-size: 7px;
    line-height: 9px;
    white-space: nowrap;
    color: #4684b5;
}

.tool svg {
    width: 20px;
    height: 20px;
}

.tool.active {
    border-left: 1px solid #ddd;
    border-right: 1px solid #ddd;
    background: linear-gradient(#f8f8f8, #e8e8e8 50%, #fafafa);
}

.tool.close {
    margin-left: auto;
    padding-top: 0;
}

.abc {
    font-size: 6px;
    font-weight: bold;
    fill: #666;
    text-anchor: middle;
}

.tool-sep {
    width: 1px;
    height: 10px;
    margin: 11px 8px 0 9px;
    background: #bbb;
}

.tool-wrap {
    position: relative;
}

/* Axis style panel */
.panel {
    position: absolute;
    top: 36px;
    left: 0;
    z-index: 2;
    width: 315px;
    border: 1px solid #ccc;
    border-top: none;
    background: #fff;
    color: #666;
}

.panel-scroll {
    display: flex;
    height: 220px;
    overflow: hidden;
}

.panel-body {
    flex: 1;
    padding: 10px 43px 0 16px;
}

.panel h4 {
    height: 19px;
    margin-bottom: 7px;
    border-bottom: 2px solid #6fa5c0;
    font-size: 10px;
    line-height: 14px;
    color: #555;
}

.field {
    display: flex;
    align-items: center;
    gap: 5px;
    height: 18px;
}

.field.tall {
    height: 19px;
}

.field > :first-child {
    width: 90px;
}

.field input[type="text"] {
    width: 28px;
    height: 14px;
    padding-left: 2px;
    border: 1px solid #d8d8d8;
    border-top-color: #aaa;
    font-size: 8px;
    color: #111;
}

.field .check input {
    margin-left: 2px;
}

.field .check + .check input {
    margin-left: 0;
}

.swatch {
    width: 15px;
    height: 14px;
    border: 1px solid #ddd;
    border-right-color: #777;
    border-bottom-color: #777;
    background: linear-gradient(#fff, #fff) 10px 9px / 2px 2px no-repeat, #000;
}

.panel-bar .thumb {
    height: 115px;
    margin-top: auto;
    margin-bottom: 5px;
}

.panel-foot {
    display: flex;
    justify-content: flex-end;
    gap: 4px;
    height: 41px;
    padding: 10px 4px;
    background: #f5f5f5;
    border-top: 1px solid #ccc;
}

.btn.save {
    background: #5a9bd0;
    border-color: #5a9bd0;
    color: #fff;
}

/* Chart */
.chart {
    display: flex;
    flex: 1;
    flex-direction: column;
    margin: 0 53px 0 3px;
}

.plot {
    width: 100%;
}

.chart-title {
    font-size: 14px;
    fill: #000;
}

.grid {
    stroke: #f0f0f0;
}

.axis {
    fill: none;
    stroke: #444;
}

.permits {
    stroke: #5f9dc0;
}

.certificates {
    fill: none;
    stroke: #cc5a4a;
}

.y-labels,
.x-labels {
    font-size: 8px;
    fill: #111;
}

.y-labels {
    text-anchor: end;
}

.x-labels {
    text-anchor: middle;
}

.legend {
    font-size: 9px;
    fill: #222;
}

.range {
    position: relative;
    display: grid;
    grid-template-columns: 91fr 122fr 130fr 125fr 131fr 126fr 130fr 130fr 70fr;
    height: 37px;
    border: 2px solid #333;
    border-bottom: none;
    background: linear-gradient(#f0f0f0 9px, #fff 9px);
}

.range span {
    border-right: 1px solid #ddd;
    font-size: 7px;
    line-height: 9px;
    color: #444;
    text-align: center;
    white-space: nowrap;
}

.range span:nth-child(9) {
    border-right: none;
}

.handle {
    position: absolute;
    top: 14px;
    width: 7px;
    height: 11px;
    border: 1px solid #777;
    border-radius: 3px;
    background: #bbb;
}

.handle.left {
    left: -5px;
}

.handle.right {
    right: -5px;
}

.range-bar {
    display: flex;
    align-items: center;
    justify-content: center;
    height: 10px;
    background: #606060;
}

.range-bar .grip {
    height: 5px;
    background: repeating-linear-gradient(90deg, transparent 0 2px, #606060 2px 3px), repeating-linear-gradient(#fff 0 2px, transparent 2px 3px);
}

.chart-foot {
    position: relative;
    display: flex;
    flex: 1;
    align-items: center;
    justify-content: center;
    gap: 5px;
    padding: 2px 128px 0 0;
    background: #f0f0f0;
    border-left: 1px solid #ddd;
    border-right: 1px solid #ddd;
}

.next {
    position: absolute;
    top: 4px;
    right: 4px;
    border-radius: 2px;
    background: #4f92c4;
}

/* Status bar */
.status-bar {
    display: flex;
    flex: none;
    justify-content: flex-end;
    height: 17px;
    background: #f0eeee;
    border-top: 2px solid #d0d0d0;
    border-bottom: 2px solid #6b7fa3;
}

.status-bar > div {
    display: flex;
    align-items: center;
}

.cells {
    align-self: stretch;
}

.cells i {
    width: 17px;
    height: 13px;
    border-left: 1px solid #ddd;
}

.zone {
    gap: 2px;
    width: 196px;
    padding-left: 2px;
}

.privacy {
    gap: 5px;
    width: 34px;
}

.zoom {
    gap: 1px;
    width: 62px;
    padding-right: 14px;
}
```
